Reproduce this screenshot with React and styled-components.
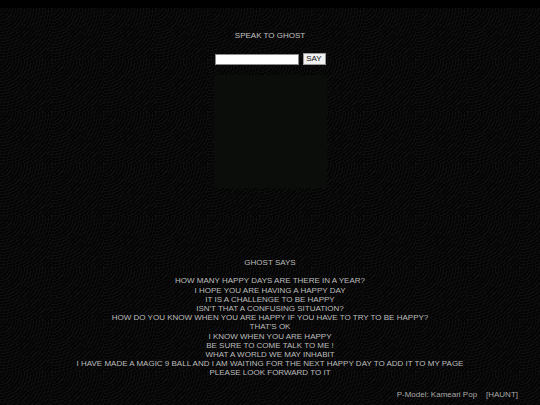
import React from "react";
import styled, { createGlobalStyle } from "styled-components";

const Global = createGlobalStyle`
  html, body { margin: 0; padding: 0; background: #000; }
  body { font-family: "Liberation Sans", Arial, sans-serif; }
`;

const Page = styled.div`
  margin-top: 8px;
  min-height: 397px;
  box-sizing: border-box;
  padding-top: 23px;
  display: flex;
  flex-direction: column;
  align-items: center;
  background-color: #040404;
  background-image:
    repeating-radial-gradient(circle at 0 0, rgba(20,20,20,0.6) 0 1px, rgba(0,0,0,0) 1px 3px),
    repeating-radial-gradient(circle at 100% 100%, rgba(16,16,16,0.5) 0 1px, rgba(0,0,0,0) 1px 4px);
  background-size: 52px 52px, 52px 52px;
  color: #bdbdbd;
  font-size: 8px;
  line-height: 9.2px;
`;

const Heading = styled.div`
  text-align: center;
  color: #c4c4c4;
`;

const FormRow = styled.form`
  display: flex;
  align-items: center;
  gap: 4px;
  margin-top: 13px;
`;

const TextInput = styled.input`
  box-sizing: border-box;
  width: 84px;
  height: 11px;
  padding: 0;
  border: 1px solid #8a8a8a;
  background: #fff;
  outline: none;
`;

const SayButton = styled.button`
  box-sizing: border-box;
  height: 12px;
  width: 23px;
  padding: 0;
  border: 1px solid #9a9a9a;
  background: #f0f0f0;
  color: #111;
  font-family: "Liberation Sans", Arial, sans-serif;
  font-size: 8px;
  line-height: 10px;
`;

const Screen = styled.div`
  margin-top: 10px;
  width: 113px;
  height: 113px;
  background: #0a0d0a;
`;

const Reply = styled.div`
  margin-top: 70px;
  text-align: center;
`;

const Lines = styled.div`
  margin-top: 9px;
  text-align: center;
  color: #bdbdbd;
`;

const Footer = styled.div`
  align-self: flex-end;
  margin-top: 12px;
  margin-right: 22px;
  color: #a8a8a8;
  white-space: pre;
`;

const lines = [
  "HOW MANY HAPPY DAYS ARE THERE IN A YEAR?",
  "I HOPE YOU ARE HAVING A HAPPY DAY",
  "IT IS A CHALLENGE TO BE HAPPY",
  "ISN'T THAT A CONFUSING SITUATION?",
  "HOW DO YOU KNOW WHEN YOU ARE HAPPY IF YOU HAVE TO TRY TO BE HAPPY?",
  "THAT'S OK",
  "I KNOW WHEN YOU ARE HAPPY",
  "BE SURE TO COME TALK TO ME !",
  "WHAT A WORLD WE MAY INHABIT",
  "I HAVE MADE A MAGIC 9 BALL AND I AM WAITING FOR THE NEXT HAPPY DAY TO ADD IT TO MY PAGE",
  "PLEASE LOOK FORWARD TO IT",
];

export default function App() {
  return (
    <>
      <Global />
      <Page>
        <Heading>SPEAK TO GHOST</Heading>
        <FormRow onSubmit={(e) => e.preventDefault()}>
          <TextInput type="text" />
          <SayButton type="submit">SAY</SayButton>
        </FormRow>
        <Screen />
        <Reply>GHOST SAYS</Reply>
        <Lines>
          {lines.map((l, i) => (
            <div key={i}>{l}</div>
          ))}
        </Lines>
        <Footer>{"P-Model: Kameari Pop    [HAUNT]"}</Footer>
      </Page>
    </>
  );
}
